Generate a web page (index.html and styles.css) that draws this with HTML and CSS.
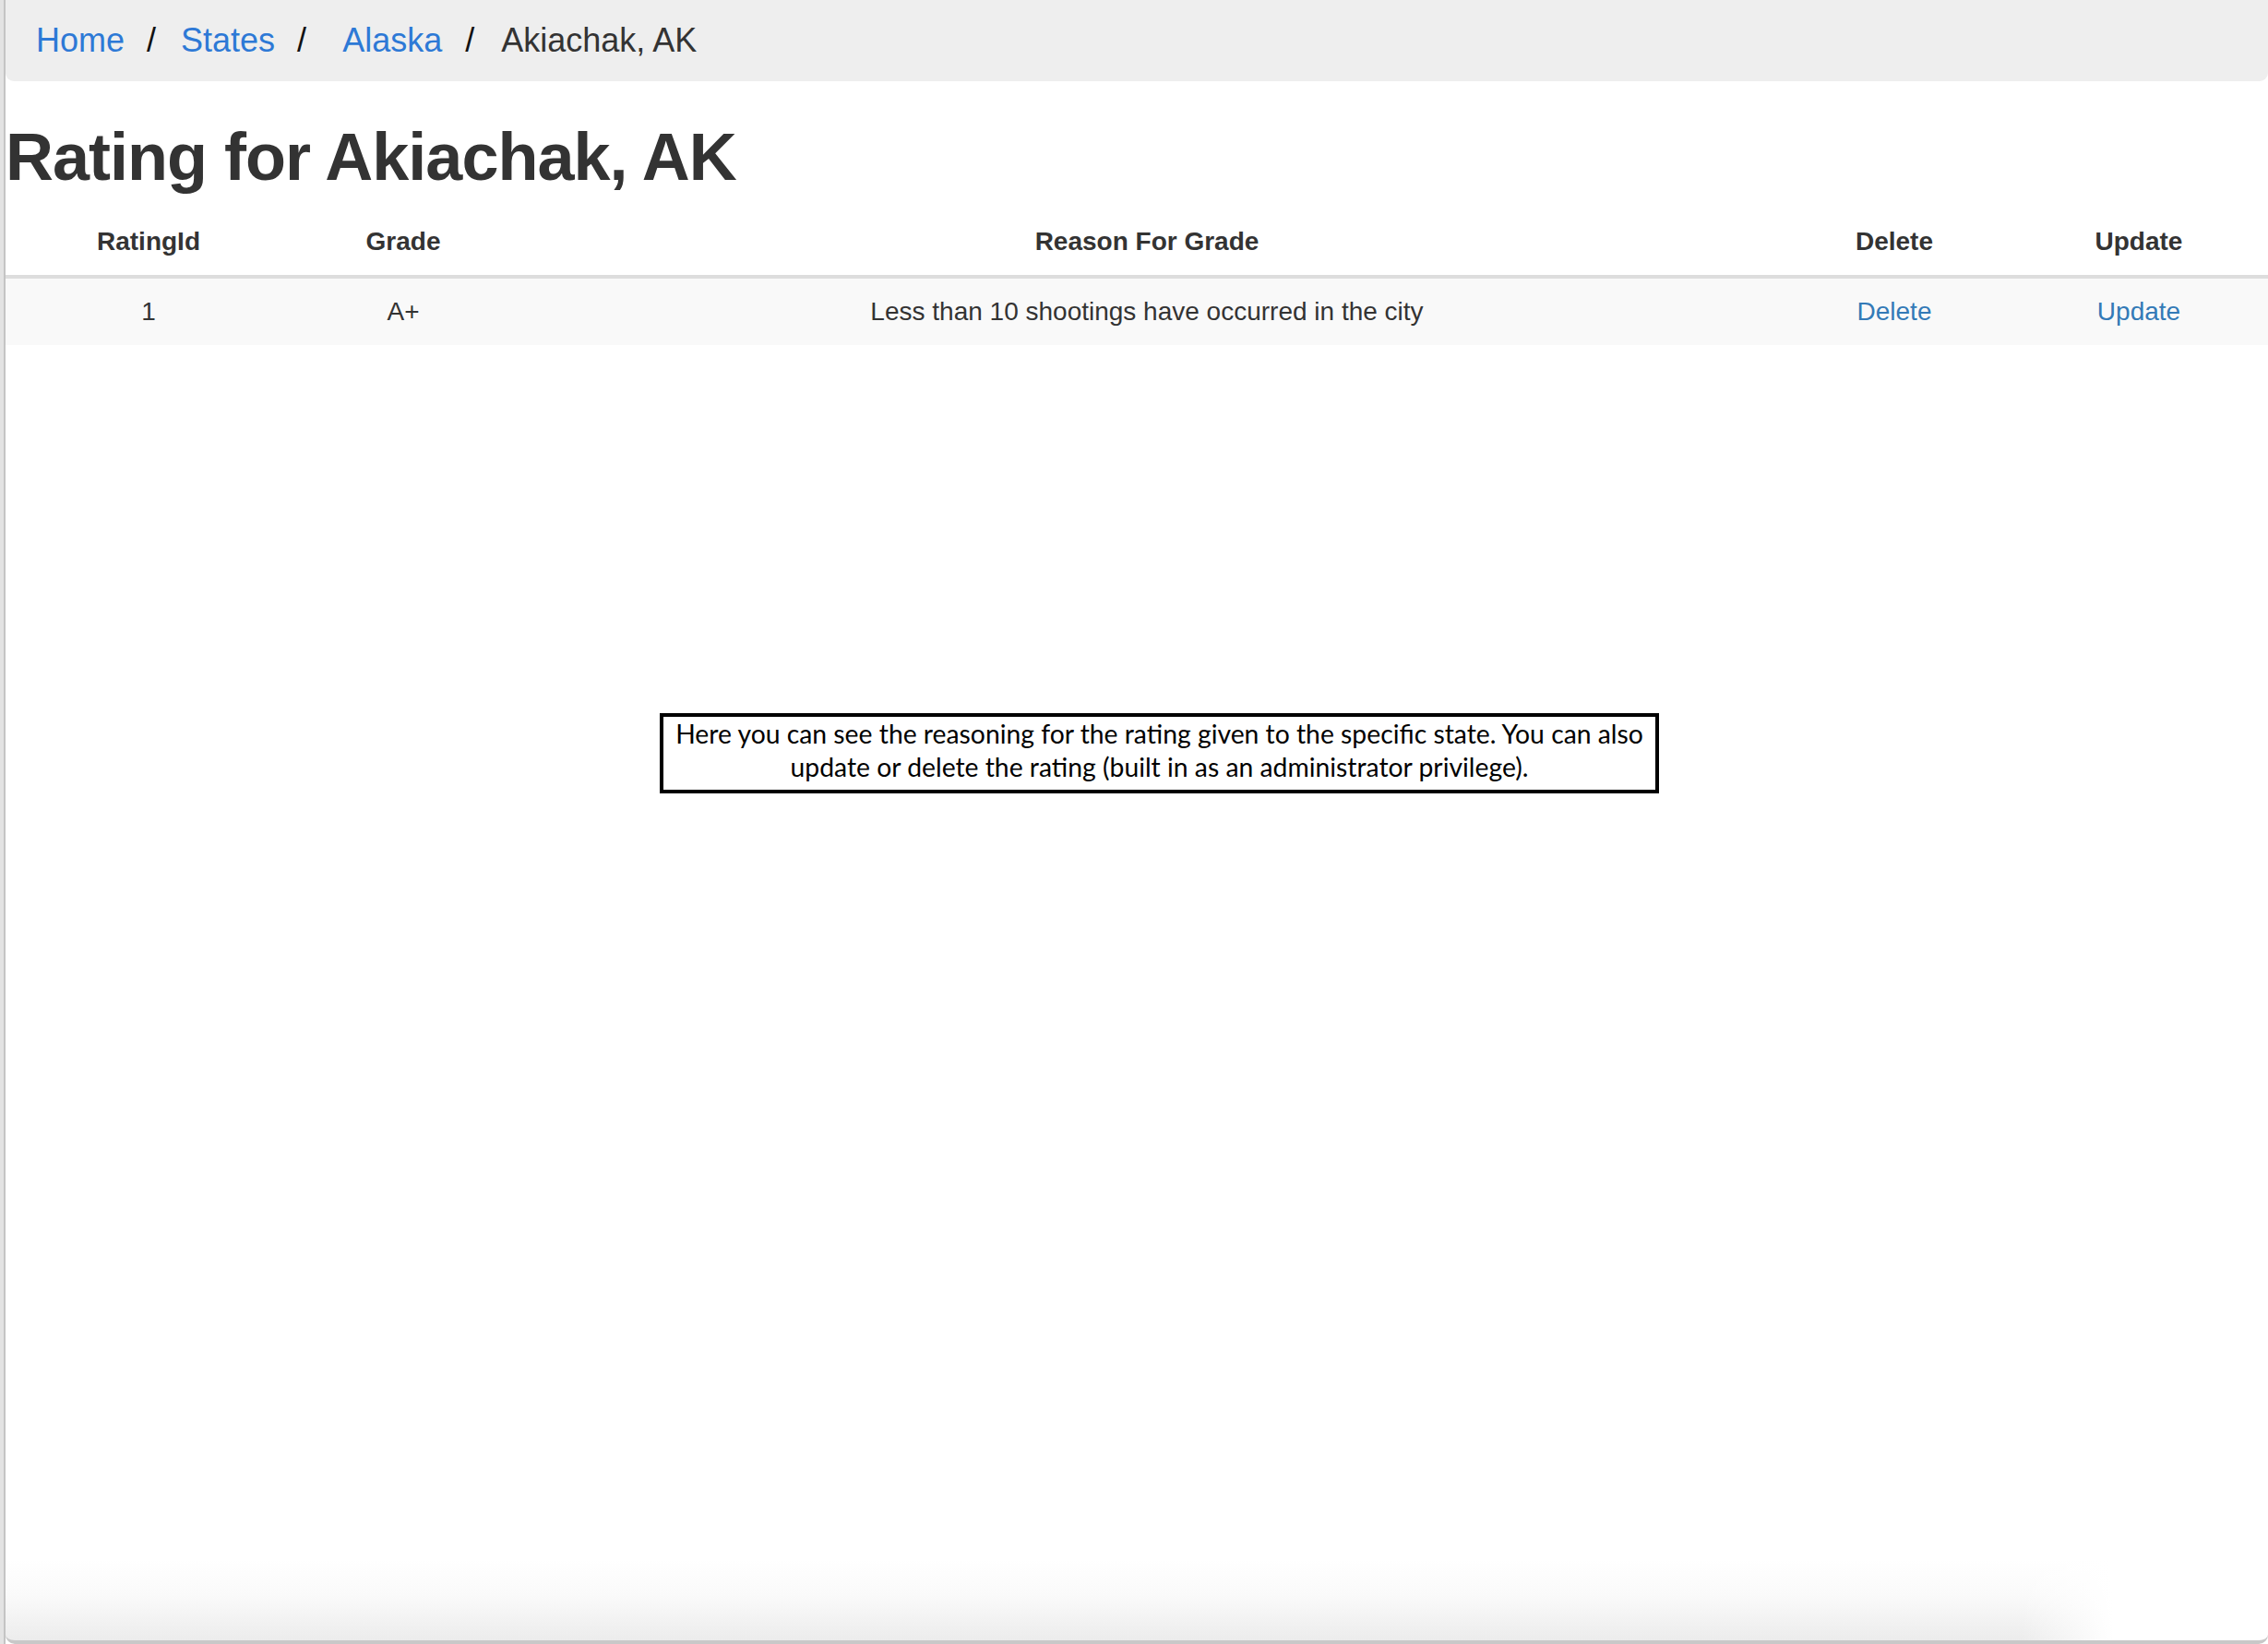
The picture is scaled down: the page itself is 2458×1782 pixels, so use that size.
FILE: index.html
```html
<!DOCTYPE html>
<html lang="en">
<head>
<meta charset="utf-8">
<title>Rating for Akiachak, AK</title>
<link rel="stylesheet" href="styles.css">
</head>
<body>
<div class="frame">
  <div class="edge"></div>
  <div class="page">
    <main class="content">
      <nav class="crumbs">
        <a href="#" class="crumb-link">Home</a>
        <span class="sep">/</span>
        <a href="#" class="crumb-link">States</a>
        <span class="sep sep-wide">/</span>
        <a href="#" class="crumb-link">Alaska</a>
        <span class="sep sep-last">/</span>
        <span class="crumb-active">Akiachak, AK</span>
      </nav>

      <h1 class="title">Rating for Akiachak, AK</h1>

      <table class="ratings">
        <colgroup>
          <col class="c-id">
          <col class="c-grade">
          <col class="c-reason">
          <col class="c-delete">
          <col class="c-update">
        </colgroup>
        <thead>
          <tr>
            <th>RatingId</th>
            <th>Grade</th>
            <th>Reason For Grade</th>
            <th>Delete</th>
            <th>Update</th>
          </tr>
        </thead>
        <tbody>
          <tr>
            <td>1</td>
            <td>A+</td>
            <td>Less than 10 shootings have occurred in the city</td>
            <td><a href="#" class="row-link">Delete</a></td>
            <td><a href="#" class="row-link">Update</a></td>
          </tr>
        </tbody>
      </table>

      <div class="note">Here you can see the reasoning for the rating given to the specific state. You can also<br>update or delete the rating (built in as an administrator privilege).</div>
    </main>
    <div class="shade"></div>
  </div>
</div>
</body>
</html>
```
FILE: styles.css
```css
html, body {
  margin: 0;
  padding: 0;
  background: #ffffff;
}

body {
  font-family: "Liberation Sans", Arial, Helvetica, sans-serif;
  color: #333333;
}

.frame {
  display: flex;
  height: 100vh;
  overflow: hidden;
}

.edge {
  width: 4px;
  flex: 0 0 4px;
  background: #e3e3e3;
  border-right: 2px solid #c4c4c4;
}

.page {
  flex: 1 1 auto;
  display: flex;
  flex-direction: column;
  min-width: 0;
}

.content {
  flex: 1 1 auto;
}

/* breadcrumb */
.crumbs {
  display: flex;
  align-items: baseline;
  background: #eeeeee;
  border-radius: 0 0 9px 9px;
  padding: 24px 0 24px 33px;
  font-size: 36px;
  line-height: 40px;
  height: 40px;
}

.crumb-link {
  color: #2d79d6;
  text-decoration: none;
}

.sep {
  color: #111111;
  margin: 0 27px 0 24px;
}

.sep-wide {
  margin-right: 39px;
}

.sep-last {
  margin-left: 25px;
  margin-right: 29px;
}

.crumb-active {
  color: #333333;
}

/* heading */
.title {
  margin: 42px 0 16px 0;
  font-size: 72px;
  line-height: 80px;
  font-weight: 700;
  letter-spacing: -1px;
  color: #333333;
}

/* table */
.ratings {
  width: 100%;
  table-layout: fixed;
  border-collapse: collapse;
  border-spacing: 0;
  font-size: 28px;
  line-height: 40px;
}

.c-id { width: 310px; }
.c-grade { width: 242px; }
.c-reason { width: 1370px; }
.c-delete { width: 250px; }
.c-update { width: 280px; }

.ratings th,
.ratings td {
  padding: 16px;
  text-align: center;
  vertical-align: bottom;
  white-space: nowrap;
}

.ratings th {
  font-weight: 700;
  color: #333333;
  border-bottom: 4px solid #dddddd;
}

.ratings tbody tr {
  background: #f9f9f9;
}

.ratings td {
  color: #333333;
}

.row-link {
  color: #337ab7;
  text-decoration: none;
}

/* annotation */
.note {
  width: 1075px;
  margin: 399px 0 0 709px;
  border: 4px solid #000000;
  padding: 0 0 7px 0;
  font-family: Lato, "Open Sans", sans-serif;
  font-size: 28.3px;
  line-height: 36px;
  color: #000000;
  text-align: center;
}

/* bottom window shade */
.shade {
  flex: 0 0 88px;
  background:
    linear-gradient(to right, rgba(255, 255, 255, 0) 2184px, #ffffff 2284px),
    linear-gradient(to bottom, #ffffff 0%, #fafafa 45%, #ececec 100%);
  border-bottom: 4px solid #c8c8c8;
  border-radius: 0 0 10px 10px;
}
```
